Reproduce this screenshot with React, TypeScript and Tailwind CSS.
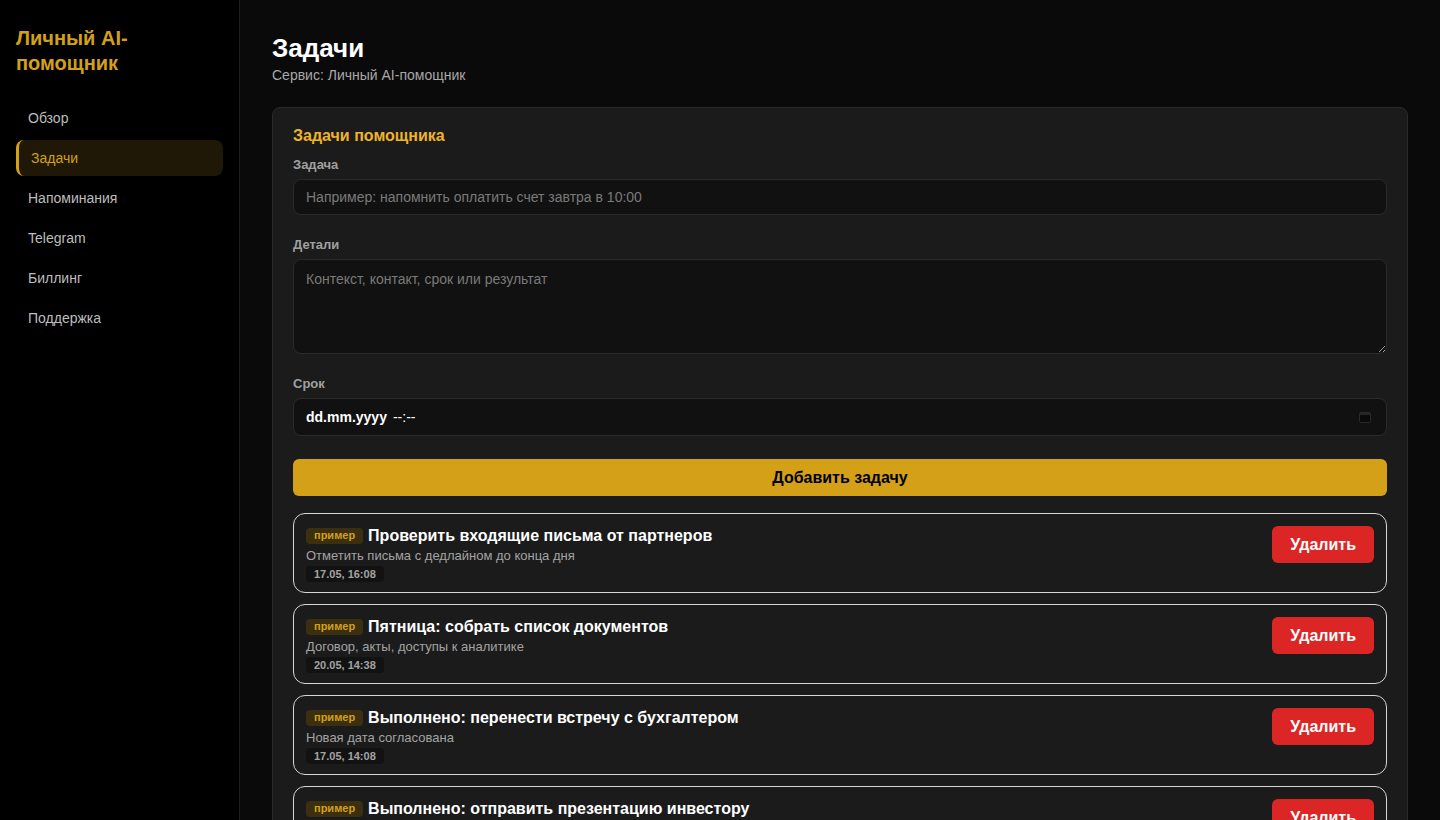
import React from 'react';

const NAV_ITEMS = ['Обзор', 'Задачи', 'Напоминания', 'Telegram', 'Биллинг', 'Поддержка'];

const TASKS = [
  { title: 'Проверить входящие письма от партнеров', details: 'Отметить письма с дедлайном до конца дня', due: '17.05, 16:08' },
  { title: 'Пятница: собрать список документов', details: 'Договор, акты, доступы к аналитике', due: '20.05, 14:38' },
  { title: 'Выполнено: перенести встречу с бухгалтером', details: 'Новая дата согласована', due: '17.05, 14:08' },
  { title: 'Выполнено: отправить презентацию инвестору', details: 'Финальная версия с обновленными цифрами', due: '16.05, 11:20' },
];

const Sidebar: React.FC = () => (
  <aside className="w-[240px] shrink-0 h-full bg-black border-r border-[#1e1e1e] px-4 pt-[26px]">
    <div className="text-[20px] leading-[25px] font-bold text-[#d4a017]">Личный AI-помощник</div>
    <nav className="mt-[24px] flex flex-col gap-1">
      {NAV_ITEMS.map((item) =>
        item === 'Задачи' ? (
          <div key={item} className="h-9 flex items-center pl-3 rounded-lg border-l-[3px] border-[#d4a017] bg-[#1f1806] text-[14px] text-[#d4a017]">
            {item}
          </div>
        ) : (
          <div key={item} className="h-9 flex items-center px-3 rounded-lg text-[14px] text-[#bdbdbd]">
            {item}
          </div>
        )
      )}
    </nav>
  </aside>
);

const TaskCard: React.FC<{ title: string; details: string; due: string }> = ({ title, details, due }) => (
  <div className="flex items-start justify-between border border-[#d6d6d6] rounded-xl pl-3 pr-3 pt-3 pb-[10px]">
    <div className="flex flex-col">
      <div className="flex items-center gap-[5px] h-[19px]">
        <span className="px-[8px] h-4 flex items-center rounded bg-[#3b2f10] text-[11px] font-bold text-[#d4a017]">пример</span>
        <span className="text-[16px] font-bold text-white">{title}</span>
      </div>
      <div className="mt-[3px] text-[13px] leading-4 text-[#a3a3a3]">{details}</div>
      <div className="mt-[2px] self-start px-2 h-4 flex items-center rounded bg-[#121212] text-[11px] font-bold text-[#a3a3a3]">{due}</div>
    </div>
    <button className="h-[37px] px-[18px] rounded-md bg-[#dc2626] text-[16px] font-bold text-white">Удалить</button>
  </div>
);

export default function App() {
  return (
    <div className="flex h-screen overflow-hidden bg-[#0a0a0a]" style={{ fontFamily: '"Liberation Sans", Arial, sans-serif' }}>
      <Sidebar />
      <main className="flex-1 overflow-hidden px-8 pt-8">
        <h1 className="text-[26px] leading-8 font-bold text-white">Задачи</h1>
        <p className="mt-[3px] text-[14px] leading-4 text-[#a8a8a8]">Сервис: Личный AI-помощник</p>

        <section className="mt-[24px] w-[1136px] bg-[#1b1b1b] border border-[#2a2a2a] rounded-lg px-5 pt-[18px] pb-5">
          <h2 className="text-[16px] leading-5 font-bold text-[#f0b429]">Задачи помощника</h2>

          <label className="block mt-[11px] text-[13px] leading-4 font-bold text-[#a0a0a0]">Задача</label>
          <input
            className="mt-[6px] w-full h-9 px-3 rounded-lg bg-[#111111] border border-[#2a2a2a] text-[14px] text-white placeholder:text-[#7a7a7a] outline-none"
            placeholder="Например: напомнить оплатить счет завтра в 10:00"
          />

          <label className="block mt-[22px] text-[13px] leading-4 font-bold text-[#a0a0a0]">Детали</label>
          <textarea
            className="mt-[6px] block w-full h-[95px] px-3 py-[9px] rounded-lg bg-[#111111] border border-[#2a2a2a] text-[14px] text-white placeholder:text-[#7a7a7a] outline-none"
            placeholder="Контекст, контакт, срок или результат"
          />

          <label className="block mt-[22px] text-[13px] leading-4 font-bold text-[#a0a0a0]">Срок</label>
          <div className="mt-[6px] w-full h-[38px] px-3 flex items-center justify-between rounded-lg bg-[#111111] border border-[#2a2a2a]">
            <span className="text-[14px] text-white">
              <span className="font-bold">dd.mm.yyyy</span>
              <span className="ml-[6px]">--:--</span>
            </span>
            <svg width="12" height="12" viewBox="0 0 12 12" fill="none" className="mr-[3px]">
              <rect x="0.5" y="1.5" width="11" height="10" rx="1" fill="#0a0a0a" stroke="#2a2a2a" />
              <rect x="1" y="2" width="10" height="2" fill="#262626" />
            </svg>
          </div>

          <button className="mt-[23px] w-full h-[37px] rounded-md bg-[#d4a017] text-[16px] font-bold text-black">Добавить задачу</button>

          <div className="mt-[17px] flex flex-col gap-[11px]">
            {TASKS.map((t) => (
              <TaskCard key={t.title} {...t} />
            ))}
          </div>
        </section>
      </main>
    </div>
  );
}
